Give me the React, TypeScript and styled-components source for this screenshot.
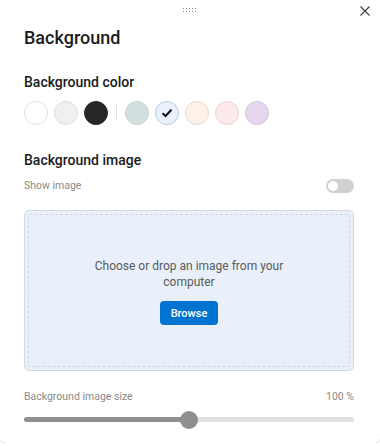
import React from 'react';
import styled, { createGlobalStyle } from 'styled-components';

const GlobalStyle = createGlobalStyle`
  html, body {
    margin: 0;
    padding: 0;
    background: #ffffff;
  }
  body {
    font-family: Roboto, 'Noto Sans', sans-serif;
    color: #1b1b1b;
  }
`;

const swatches = [
  { color: '#ffffff', border: '#dedede' },
  { color: '#f0f0f0', border: '#dcdcdc' },
  { color: '#262626', border: '#262626' },
];

const tints = [
  { color: '#d2e1e0', border: '#c6d3d2' },
  { color: '#e9f1fc', border: '#b9c9dc', selected: true },
  { color: '#fdf2ea', border: '#ead8cc' },
  { color: '#fce9ea', border: '#ecd3d5' },
  { color: '#e6d7ef', border: '#d3c1df' },
];

const App = () => {
  const sliderValue = 50;

  return (
    <>
      <GlobalStyle />
      <Panel>
        <TopBar>
          <Grip>
            {Array.from({ length: 10 }).map((_, i) => (
              <span key={i} />
            ))}
          </Grip>
          <CloseBtn aria-label="Close">
            <svg width="10" height="10" viewBox="0 0 10 10">
              <path d="M0.5 0.5L9.5 9.5M9.5 0.5L0.5 9.5" stroke="#3a3a3a" strokeWidth="1.1" />
            </svg>
          </CloseBtn>
        </TopBar>

        <Title>Background</Title>

        <Section $top={22}>
          <SectionTitle>Background color</SectionTitle>
          <SwatchRow>
            {swatches.map((s) => (
              <Swatch key={s.color} $color={s.color} $border={s.border} />
            ))}
            <Divider />
            {tints.map((s) => (
              <Swatch key={s.color} $color={s.color} $border={s.border}>
                {s.selected && (
                  <svg width="12" height="10" viewBox="0 0 12 10">
                    <path d="M1.5 5.2L4.5 8L10.5 1.8" fill="none" stroke="#111" strokeWidth="2" />
                  </svg>
                )}
              </Swatch>
            ))}
          </SwatchRow>
        </Section>

        <Section $top={25}>
          <SectionTitle>Background image</SectionTitle>
          <OptionRow>
            <Muted>Show image</Muted>
            <Toggle />
          </OptionRow>
          <DropZone>
            <DropInner>
              <DropText>Choose or drop an image from your computer</DropText>
              <BrowseBtn>Browse</BrowseBtn>
            </DropInner>
          </DropZone>
          <SizeRow>
            <Muted>Background image size</Muted>
            <Muted>100 %</Muted>
          </SizeRow>
          <Slider>
            <SliderFill style={{ width: `${sliderValue}%` }} />
            <SliderThumb style={{ left: `${sliderValue}%` }} />
          </Slider>
        </Section>
      </Panel>
    </>
  );
};

export default App;

const Panel = styled.div`
  width: 380px;
  height: 443px;
  box-sizing: border-box;
  padding: 0 26px 0 24px;
  background: #fff;
  border-radius: 0 0 6px 6px;
  box-shadow: 0 1px 2px rgba(0, 0, 0, 0.18);
`;

const TopBar = styled.div`
  position: relative;
  height: 20px;
  display: flex;
  justify-content: center;
  align-items: center;
`;

const Grip = styled.div`
  display: grid;
  grid-template-columns: repeat(5, 1px);
  grid-template-rows: repeat(2, 1px);
  column-gap: 2px;
  row-gap: 2px;
  margin-top: -1px;

  span {
    width: 1px;
    height: 1px;
    background: #8a8a8a;
  }
`;

const CloseBtn = styled.button`
  position: absolute;
  right: -17px;
  top: 5px;
  width: 12px;
  height: 12px;
  padding: 0;
  border: none;
  background: none;
  display: flex;
  align-items: center;
  justify-content: center;
`;

const Title = styled.h1`
  margin: 6px 0 0;
  font-size: 18px;
  line-height: 24px;
  font-weight: 500;
  color: #1b1b1b;
`;

const Section = styled.div<{ $top?: number }>`
  margin-top: ${(p) => p.$top ?? 20}px;
`;

const SectionTitle = styled.h2`
  margin: 0;
  font-size: 14px;
  line-height: 20px;
  font-weight: 500;
  color: #1b1b1b;
`;

const SwatchRow = styled.div`
  display: flex;
  align-items: center;
  gap: 6px;
  margin-top: 9px;
`;

const Swatch = styled.div<{ $color: string; $border: string }>`
  width: 24px;
  height: 24px;
  box-sizing: border-box;
  border-radius: 50%;
  background: ${(p) => p.$color};
  border: 1px solid ${(p) => p.$border};
  display: flex;
  align-items: center;
  justify-content: center;
`;

const Divider = styled.div`
  width: 1px;
  height: 16px;
  background: #e2e2e2;
  margin: 0 2px;
`;

const OptionRow = styled.div`
  display: flex;
  justify-content: space-between;
  align-items: center;
  margin-top: 8px;
`;

const Muted = styled.span`
  font-size: 10.5px;
  line-height: 16px;
  color: #8a8a8a;
`;

const Toggle = styled.div`
  position: relative;
  width: 28px;
  height: 14px;
  border-radius: 7px;
  background: #d1d1d1;

  &::after {
    content: '';
    position: absolute;
    left: 2px;
    top: 2px;
    width: 10px;
    height: 10px;
    border-radius: 50%;
    background: #fff;
  }
`;

const DropZone = styled.div`
  margin-top: 16px;
  height: 161px;
  box-sizing: border-box;
  padding: 3px;
  border: 1px solid #cfd9e6;
  border-radius: 5px;
  background: #e9f0fa;
  display: flex;
`;

const DropInner = styled.div`
  flex: 1;
  border: 1px dashed #cdd6e2;
  border-radius: 2px;
  display: flex;
  flex-direction: column;
  align-items: center;
  justify-content: center;
  padding-top: 2px;
`;

const DropText = styled.p`
  margin: 0;
  width: 200px;
  text-align: center;
  font-size: 12px;
  line-height: 16px;
  color: #5a5a5a;
`;

const BrowseBtn = styled.button`
  margin-top: 11px;
  width: 58px;
  height: 24px;
  border: none;
  border-radius: 4px;
  background: #0073d1;
  color: #fff;
  font-family: inherit;
  font-size: 11px;
  font-weight: 500;
  padding: 0;
`;

const SizeRow = styled.div`
  display: flex;
  justify-content: space-between;
  align-items: center;
  margin-top: 18px;
`;

const Slider = styled.div`
  position: relative;
  margin-top: 12px;
  height: 5px;
  border-radius: 3px;
  background: #e1e1e1;
`;

const SliderFill = styled.div`
  height: 100%;
  border-radius: 3px;
  background: #8f8f8f;
`;

const SliderThumb = styled.div`
  position: absolute;
  top: 50%;
  width: 18px;
  height: 18px;
  border-radius: 50%;
  background: #8f8f8f;
  transform: translate(-50%, -50%);
`;
